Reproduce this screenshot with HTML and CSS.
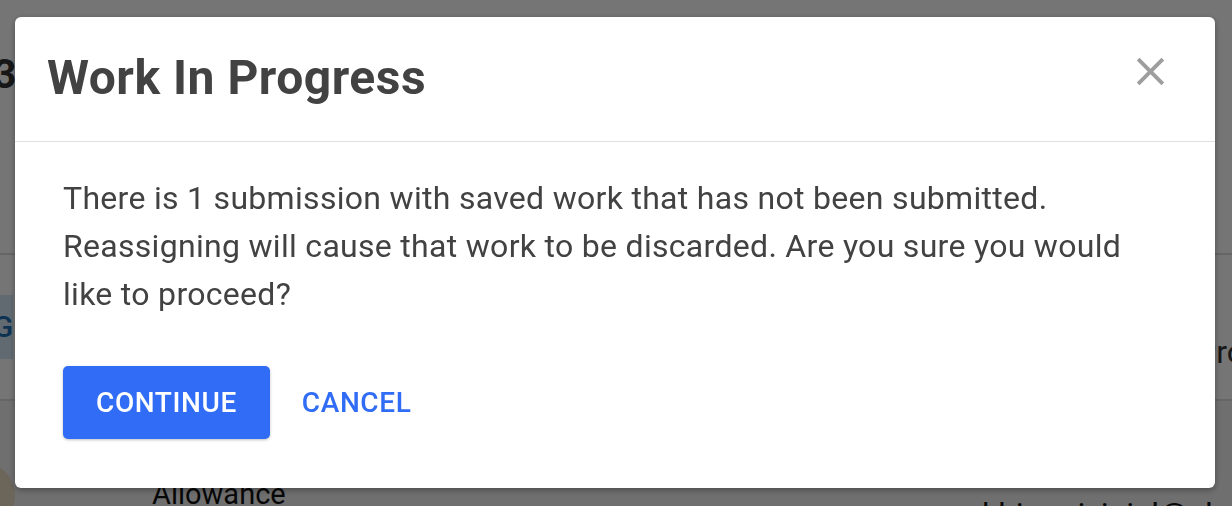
FILE: index.html
```html
<!DOCTYPE html>
<html lang="en">
<head>
<meta charset="utf-8">
<title>Work In Progress</title>
<link rel="stylesheet" href="styles.css">
</head>
<body>
<div class="page">
  <div class="row row-top"><span class="page-title">Q3</span></div>
  <div class="row row-mid"></div>
  <div class="row row-chip">
    <span class="chip">ASSIG</span>
    <span class="cell-right">Pro</span>
  </div>
  <div class="row row-bottom">
    <span class="avatar"></span>
    <span class="cell-name">Allowance</span>
    <span class="cell-email">ankhi.maivinial@abc</span>
  </div>
</div>
<div class="overlay">
  <div class="modal" role="dialog" aria-labelledby="modal-title">
    <div class="modal-header">
      <h1 id="modal-title" class="modal-title">Work In Progress</h1>
      <button class="close-btn" aria-label="Close">
        <svg viewBox="0 0 24 24" width="47" height="47"><path d="M19 6.41L17.59 5 12 10.59 6.41 5 5 6.41 10.59 12 5 17.59 6.41 19 12 13.41 17.59 19 19 17.59 13.41 12z" fill="currentColor"/></svg>
      </button>
    </div>
    <div class="modal-body">
      <p class="modal-text">There is 1 submission with saved work that has not been submitted. Reassigning will cause that work to be discarded. Are you sure you would like to proceed?</p>
      <div class="actions">
        <button class="btn btn-primary">CONTINUE</button>
        <button class="btn btn-text">CANCEL</button>
      </div>
    </div>
  </div>
</div>
</body>
</html>
```
FILE: styles.css
```css
html, body {
  margin: 0;
  padding: 0;
  height: 100%;
  overflow: hidden;
}
body {
  font-family: Roboto, "Liberation Sans", sans-serif;
  background: #ffffff;
  color: #222;
}
.page {
  display: flex;
  flex-direction: column;
  overflow: hidden;
}
.row {
  display: flex;
  align-items: center;
  border-bottom: 2px solid #dcdcdc;
  box-sizing: border-box;
}
.row-top {
  height: 141px;
  border-bottom: none;
  padding-top: 8px;
}
.page-title {
  margin-left: -34px;
  font-size: 40px;
  font-weight: 700;
  color: #333;
}
.row-mid {
  height: 114px;
}
.row-chip {
  height: 146px;
  justify-content: space-between;
  align-items: flex-start;
}
.chip {
  background: #d3e8f7;
  color: #1f6eb3;
  font-size: 30px;
  font-weight: 500;
  height: 64px;
  line-height: 64px;
  margin-left: -82px;
  padding: 0 0 0 10px;
  margin-top: 40px;
}
.cell-right {
  font-size: 32px;
  color: #333;
  margin-right: -13px;
  margin-top: 78px;
}
.row-bottom {
  height: 120px;
  border-bottom: none;
  background: #f2f2f2;
  align-items: flex-start;
}
.avatar {
  width: 64px;
  height: 64px;
  border-radius: 50%;
  background: #e9dcc4;
  margin-left: -49px;
  margin-top: 62px;
  flex: none;
}
.cell-name {
  font-size: 29px;
  color: #111;
  margin-left: 137px;
  margin-top: 76px;
}
.cell-email {
  font-size: 32px;
  color: #111;
  margin-left: auto;
  margin-right: -8px;
  margin-top: 94px;
}

.overlay {
  position: fixed;
  inset: 0;
  background: rgba(0, 0, 0, 0.54);
  display: flex;
  align-items: flex-start;
  justify-content: flex-start;
  padding: 17px 0 0 15px;
}
.modal {
  width: 1200px;
  height: 471px;
  background: #ffffff;
  border-radius: 6px;
  box-shadow: 0 2px 6px rgba(0, 0, 0, 0.35);
  display: flex;
  flex-direction: column;
  overflow: hidden;
}
.modal-header {
  display: flex;
  align-items: flex-start;
  justify-content: space-between;
  padding: 33px 41px 35px 32px;
  border-bottom: 1px solid #e0e0e0;
}
.modal-title {
  margin: 0;
  font-size: 48px;
  line-height: 56px;
  font-weight: 700;
  letter-spacing: 0.5px;
  color: #424242;
}
.close-btn {
  border: none;
  background: none;
  padding: 0;
  margin: -2px 0 0 0;
  color: #9e9e9e;
  width: 47px;
  height: 47px;
  display: flex;
  cursor: pointer;
}
.modal-body {
  padding: 32px 48px 0 48px;
}
.modal-text {
  margin: 0;
  font-size: 32px;
  line-height: 48px;
  letter-spacing: 0.3px;
  color: #424242;
}
.actions {
  display: flex;
  margin: 48px 0 0 0;
}
.btn {
  font-family: Roboto, "Liberation Sans", sans-serif;
  font-size: 28px;
  font-weight: 500;
  letter-spacing: 0.6px;
  height: 73px;
  padding: 0 33px;
  border: none;
  border-radius: 5px;
  cursor: pointer;
}
.btn-primary {
  background: #306cf5;
  color: #ffffff;
  box-shadow: 0 1px 3px rgba(0, 0, 0, 0.25);
}
.btn-text {
  background: transparent;
  color: #306cf5;
  padding-left: 32px;
}
```
